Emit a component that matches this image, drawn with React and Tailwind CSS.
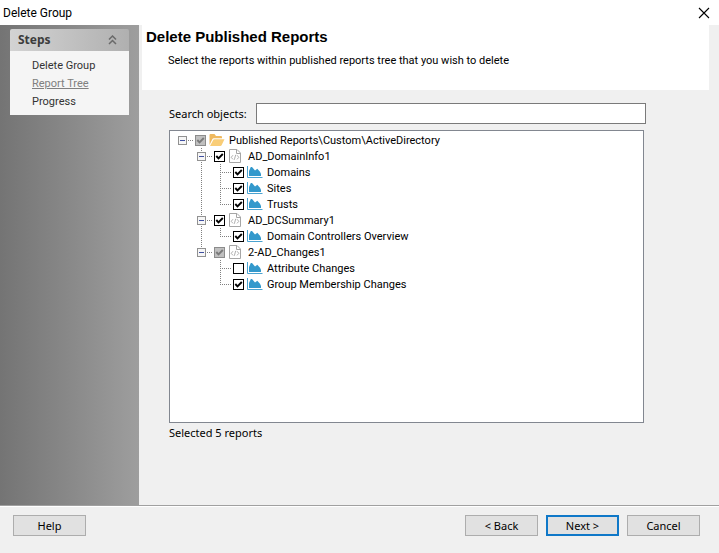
import { useState } from "react";

const TREE = [
  { id: "root", level: 0, kind: "folder", state: "mixed", label: "Published Reports\\Custom\\ActiveDirectory", cells: ["expander"] },
  { id: "info", level: 1, kind: "file", state: "on", label: "AD_DomainInfo1", cells: ["blank", "expanderMid"] },
  { id: "domains", level: 2, kind: "chart", state: "on", label: "Domains", cells: ["blank", "line", "tee"] },
  { id: "sites", level: 2, kind: "chart", state: "on", label: "Sites", cells: ["blank", "line", "tee"] },
  { id: "trusts", level: 2, kind: "chart", state: "on", label: "Trusts", cells: ["blank", "line", "elbow"] },
  { id: "dc", level: 1, kind: "file", state: "on", label: "AD_DCSummary1", cells: ["blank", "expanderMid"] },
  { id: "overview", level: 2, kind: "chart", state: "on", label: "Domain Controllers Overview", cells: ["blank", "line", "elbow"] },
  { id: "changes", level: 1, kind: "file", state: "mixed", label: "2-AD_Changes1", cells: ["blank", "expanderEnd"] },
  { id: "attribute", level: 2, kind: "chart", state: "off", label: "Attribute Changes", cells: ["blank", "blank", "tee"] },
  { id: "membership", level: 2, kind: "chart", state: "on", label: "Group Membership Changes", cells: ["blank", "blank", "elbow"] },
];

function TreeCell({ type }) {
  const up = type !== "blank" && type !== "expander";
  const down = type === "line" || type === "tee" || type === "expanderMid";
  const right = type !== "blank" && type !== "line";
  const box = type.startsWith("expander");
  return (
    <svg width="19" height="16" viewBox="0 0 19 16" className="shrink-0 overflow-visible" shapeRendering="crispEdges" aria-hidden="true">
      <g stroke="#808080" strokeWidth="1" strokeDasharray="1 1">
        {up && <path d="M9.5 0V8" />}
        {down && <path d="M9.5 8V16" />}
        {right && <path d="M9 8.5H21" />}
      </g>
      {box && (
        <g>
          <rect x="5.5" y="4.5" width="8" height="8" rx="1" fill="#f6f6f6" stroke="#919191" />
          <path d="M7 8.5H12" stroke="#3f4fa0" />
        </g>
      )}
    </svg>
  );
}

function Check({ id, state }) {
  const [checked, setChecked] = useState(state !== "off");
  const mixed = state === "mixed";
  return (
    <span className="grid w-[17px] shrink-0 place-items-center">
      <input
        id={id}
        type="checkbox"
        checked={checked}
        onChange={(e) => setChecked(e.target.checked)}
        className={
          mixed
            ? "col-start-1 row-start-1 size-[11px] appearance-none border border-[#8c8c8c] bg-[#c0c0c0]"
            : "col-start-1 row-start-1 size-[11px] appearance-none border border-black bg-white"
        }
      />
      {checked && (
        <svg width="11" height="11" viewBox="0 0 11 11" className="pointer-events-none col-start-1 row-start-1" aria-hidden="true">
          <path d="M2.3 5L4.5 7.4L8.8 3" fill="none" stroke={mixed ? "#7a7a7a" : "#000"} strokeWidth="1.9" />
        </svg>
      )}
    </span>
  );
}

function NodeIcon({ kind }) {
  if (kind === "folder") {
    return (
      <svg width="16" height="16" viewBox="0 0 16 16" className="shrink-0" aria-hidden="true">
        <path d="M0.5 13V3Q0.5 2 1.5 2H5.5L7 4H12Q13 4 13 5V6.2H4.8Q3.8 6.2 3.3 7.2Z" fill="#efb95f" />
        <path d="M1 14L4.2 8Q4.6 7.2 5.5 7.2H15.5L12.6 13.2Q12.2 14 11.3 14Z" fill="#f9cd77" />
      </svg>
    );
  }
  if (kind === "file") {
    return (
      <svg width="16" height="16" viewBox="0 0 16 16" className="shrink-0" fill="none" stroke="#a6a6a6" aria-hidden="true">
        <path d="M1.5 1.5H9L12.5 5V14.5H1.5Z" fill="#fff" />
        <path d="M8.5 1.5V5.5H12.5" />
        <path d="M5 7.2L3.2 9.3L5 11.4M9 7.2L10.8 9.3L9 11.4M7.7 6.8L6.3 11.8" strokeWidth="0.9" />
      </svg>
    );
  }
  return (
    <svg width="16" height="16" viewBox="0 0 16 16" className="shrink-0" aria-hidden="true">
      <path d="M2 12V7L3.8 3H5L8 6.4L10.3 4.8L13 7.8L14 10V12Z" fill="#3399cc" />
      <path d="M0.5 2V13.5H15.5" fill="none" stroke="#4aa3d1" />
    </svg>
  );
}

function DialogButton({ children, primary }) {
  return (
    <button
      type="button"
      className={
        primary
          ? "h-[21px] w-[73px] border-2 border-[#0f78c8] bg-[#e1e1e1] font-['Noto_Sans',sans-serif] text-[11px] leading-4"
          : "h-[21px] w-[73px] border border-[#adadad] bg-[#e1e1e1] font-['Noto_Sans',sans-serif] text-[11px] leading-4"
      }
    >
      {children}
    </button>
  );
}

export default function App() {
  return (
    <div className="flex min-h-screen flex-col bg-[#f0f0f0] font-['Roboto',sans-serif] text-[11px] leading-4 text-black">
      <header className="flex h-[25px] items-center justify-between bg-white pr-[9px] pl-[3px]">
        <span className="text-[12px]">Delete Group</span>
        <button type="button" aria-label="Close" className="size-3">
          <svg width="12" height="12" viewBox="0 0 12 12" stroke="#000" strokeWidth="1.1" aria-hidden="true">
            <path d="M1 1L11 11M11 1L1 11" />
          </svg>
        </button>
      </header>

      <div className="flex flex-1">
        <aside className="w-[139px] shrink-0 bg-linear-to-r from-[#747474] to-[#9e9e9e] px-[10px] pt-1">
          <div className="flex h-[22px] items-center justify-between rounded-t-[2px] bg-linear-to-r from-[#d3d3d3] to-[#b0b0b0] px-2">
            <h2 className="font-['Noto_Sans',sans-serif] text-[12px] font-bold text-[#3c3c3c]">Steps</h2>
            <button type="button" aria-label="Collapse steps" className="w-[13px]">
              <svg width="9" height="10" viewBox="0 0 9 10" fill="none" stroke="#6a6a6a" strokeWidth="1.5" aria-hidden="true">
                <path d="M1 4.5L4.5 1L8 4.5M1 9L4.5 5.5L8 9" />
              </svg>
            </button>
          </div>
          <ul className="flex flex-col gap-0.5 bg-[#f5f5f5] px-[22px] pt-[7px] pb-[5px] text-[#333333]">
            <li>Delete Group</li>
            <li>
              <a href="#report-tree" className="text-[#808080] underline">Report Tree</a>
            </li>
            <li>Progress</li>
          </ul>
        </aside>

        <main className="flex flex-1 flex-col pr-[10px] pl-[3px]">
          <div className="h-[65px] bg-white pt-0.5 pl-1">
            <h1 className="font-['Liberation_Sans',Arial,sans-serif] text-[15px] leading-5 font-bold">Delete Published Reports</h1>
            <p className="pt-[6px] pl-[22px]">Select the reports within published reports tree that you wish to delete</p>
          </div>

          <div className="flex flex-1 flex-col pr-[63px] pb-16 pl-[27px]">
            <div className="flex items-center pt-[13px]">
              <label htmlFor="search" className="w-[87px] shrink-0 font-['Noto_Sans',sans-serif]">Search objects:</label>
              <input id="search" type="text" className="h-[21px] min-w-0 flex-1 border border-[#7a7a7a] bg-white px-1" />
            </div>
            <ul className="mt-[6px] mr-[2px] flex-1 border border-[#828790] bg-white py-px pl-[3px]">
              {TREE.map((node) => (
                <li key={node.id} className="flex h-4 items-center">
                  {node.cells.map((type, i) => (
                    <TreeCell key={i} type={type} />
                  ))}
                  <Check id={node.id} state={node.state} />
                  <label htmlFor={node.id} className="flex h-4 items-start gap-1 whitespace-nowrap">
                    <NodeIcon kind={node.kind} />
                    <span className="pt-px">{node.label}</span>
                  </label>
                </li>
              ))}
            </ul>
            <p className="pt-0.5 font-['Noto_Sans',sans-serif]">Selected 5 reports</p>
          </div>
        </main>
      </div>

      <footer className="flex h-12 items-start gap-2 border-t border-[#a0a0a0] pr-[19px] pl-[13px] shadow-[inset_0_1px_0_#ffffff]">
        <div className="flex flex-1 items-start gap-2 pt-[9px]">
          <DialogButton>Help</DialogButton>
          <span className="flex-1" />
          <DialogButton>&lt; Back</DialogButton>
          <DialogButton primary>Next &gt;</DialogButton>
          <DialogButton>Cancel</DialogButton>
        </div>
      </footer>
    </div>
  );
}
